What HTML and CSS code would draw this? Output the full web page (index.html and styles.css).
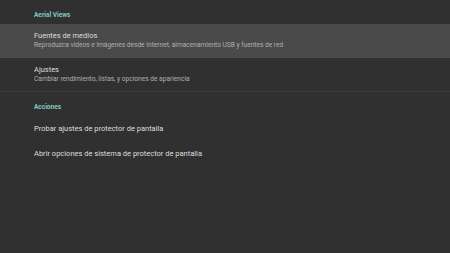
FILE: index.html
```html
<!DOCTYPE html>
<html lang="es">
<head>
  <meta charset="utf-8" />
  <title>Aerial Views</title>
  <link rel="stylesheet" href="styles.css">
</head>
<body>
  <div class="settings">
    <div class="group-title">Aerial Views</div>
    <div class="pref two-line focused">
      <div class="pref-title">Fuentes de medios</div>
      <div class="pref-summary">Reproduzca vídeos e imágenes desde Internet, almacenamiento USB y fuentes de red</div>
    </div>
    <div class="pref two-line">
      <div class="pref-title">Ajustes</div>
      <div class="pref-summary">Cambiar rendimiento, listas, y opciones de apariencia</div>
    </div>
    <div class="divider"></div>
    <div class="group-title">Acciones</div>
    <div class="pref one-line">
      <div class="pref-title">Probar ajustes de protector de pantalla</div>
    </div>
    <div class="pref one-line">
      <div class="pref-title">Abrir opciones de sistema de protector de pantalla</div>
    </div>
  </div>
</body>
</html>
```

FILE: styles.css
```css
:root{
  --bg:#303030;
  --focus:#4a4a4a;
  --accent:#80cbc4;
  --text:#dedede;
  --muted:#b0b0b0;
  --line:#3a3a3a;
}

* { box-sizing: border-box; }
html, body { height:100%; }

body{
  margin:0; background:var(--bg); color:var(--text);
  font-family: Roboto, "Noto Sans", "Liberation Sans", sans-serif;
}

.settings{ display:flex; flex-direction:column; }

.group-title{
  height:24px; padding:11px 0 0 34px;
  font-size:6.5px; line-height:8px; font-weight:700; color:var(--accent);
}

.pref{ padding-left:34px; }
.pref.two-line{ height:34px; padding-top:7px; }
.pref.two-line + .pref.two-line{ height:33px; }
.pref.one-line{ height:25px; padding-top:7.5px; }
.pref.focused{ background:var(--focus); }

.pref-title{ font-size:7.5px; line-height:10px; color:var(--text); }
.pref-summary{ font-size:6.6px; line-height:8px; color:var(--muted); }

.divider{ height:1px; background:var(--line); }
```
